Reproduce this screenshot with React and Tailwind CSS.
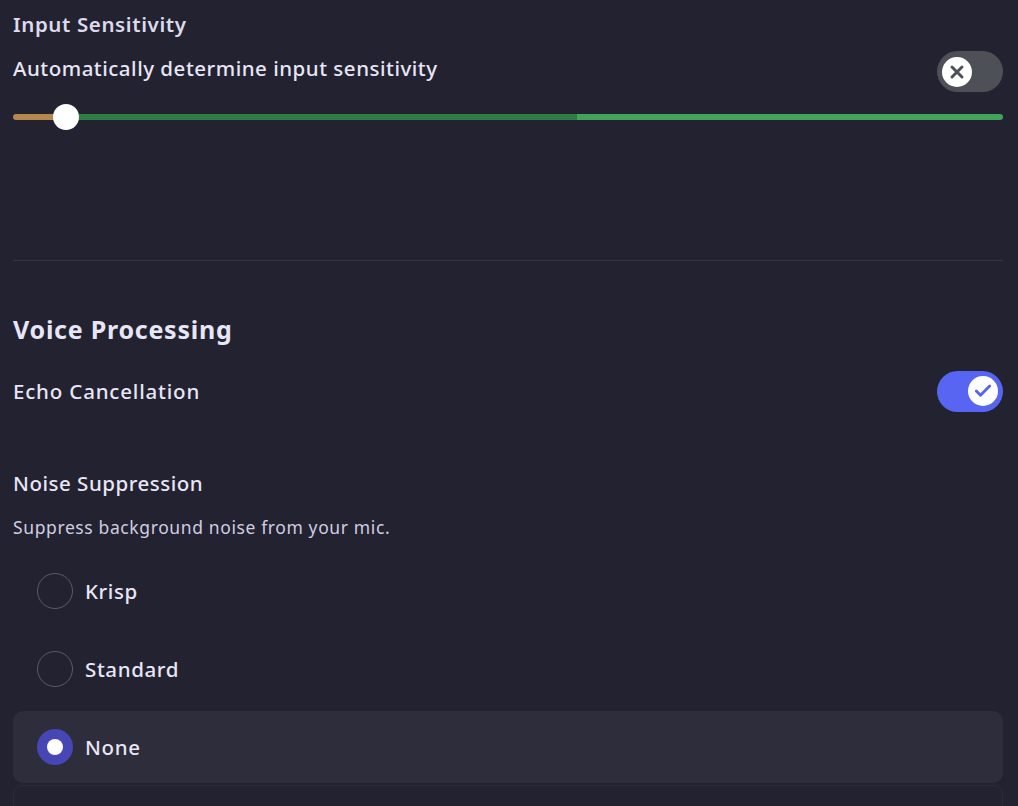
import { Check, X } from "lucide-react";

const FONT = { fontFamily: '"Noto Sans", "Liberation Sans", sans-serif' };

function Toggle({ on }) {
  return (
    <div
      className={`flex h-[41px] w-[66px] shrink-0 items-center rounded-full px-[5px] ${
        on ? "justify-end bg-[#5865f2]" : "justify-start bg-[#4e5058]"
      }`}
    >
      <div className="flex h-[30px] w-[30px] items-center justify-center rounded-full bg-white">
        {on ? (
          <Check size={20} strokeWidth={3.5} className="text-[#5865f2]" />
        ) : (
          <X size={20} strokeWidth={3.5} className="text-[#4e5058]" />
        )}
      </div>
    </div>
  );
}

function Radio({ label, selected }) {
  return (
    <div
      className={`flex h-[72px] items-center gap-3 rounded-[10px] pl-6 ${
        selected ? "bg-[#2e2d3b]" : ""
      }`}
    >
      {selected ? (
        <div className="flex h-[36px] w-[36px] items-center justify-center rounded-full bg-[#4647b5]">
          <div className="h-[16px] w-[16px] rounded-full bg-white" />
        </div>
      ) : (
        <div className="h-[36px] w-[36px] rounded-full border-[1.5px] border-[#5d5b68]" />
      )}
      <span className="text-[20.5px] font-medium tracking-[0.03em] text-[#e8e6f6]">{label}</span>
    </div>
  );
}

export default function App() {
  return (
    <div
      style={FONT}
      className="h-[806px] w-[1018px] overflow-hidden bg-[#232230] pl-[13px] pr-[15px] pt-[10px]"
    >
      {/* Input Sensitivity */}
      <h3 className="text-[20.5px] font-semibold leading-[28px] tracking-[0.03em] text-[#dcdaec]">
        Input Sensitivity
      </h3>

      <div className="mt-[13px] flex h-[41px] items-start justify-between">
        <span className="mt-[3px] text-[20.5px] font-medium leading-[28px] tracking-[0.025em] text-[#e8e6f6]">
          Automatically determine input sensitivity
        </span>
        <Toggle on={false} />
      </div>

      <div className="relative mt-[12px] h-[26px]">
        <div className="absolute left-0 right-0 top-[10px] flex h-[6px] overflow-hidden rounded-full">
          <div className="w-[52px] bg-[#b5894d]" />
          <div className="w-[512px] bg-[#2e7d44]" />
          <div className="flex-1 bg-[#43a35b]" />
        </div>
        <div className="absolute left-[40px] top-0 h-[26px] w-[26px] rounded-full bg-white" />
      </div>

      <div className="mt-[130px] h-px bg-[#363545]" />

      {/* Voice Processing */}
      <h2 className="mt-[52px] text-[25px] font-bold leading-[32px] tracking-[0.03em] text-[#e8e6f6]">
        Voice Processing
      </h2>

      <div className="mt-[25px] flex h-[42px] items-center justify-between">
        <span className="text-[20.5px] font-medium tracking-[0.04em] text-[#e8e6f6]">
          Echo Cancellation
        </span>
        <Toggle on />
      </div>

      <h4 className="mt-[57px] text-[20.5px] font-medium leading-[28px] tracking-[0.025em] text-[#e8e6f6]">
        Noise Suppression
      </h4>
      <p className="mt-[18px] text-[17.5px] leading-[24px] tracking-[0.035em] text-[#cfcde0]">
        Suppress background noise from your mic.
      </p>

      <div className="mt-[16px] flex flex-col gap-[6px]">
        <Radio label="Krisp" />
        <Radio label="Standard" />
        <Radio label="None" selected />
      </div>
      <div className="mt-[2px] h-[40px] rounded-[10px] border border-[#2c2b38]" />
    </div>
  );
}
